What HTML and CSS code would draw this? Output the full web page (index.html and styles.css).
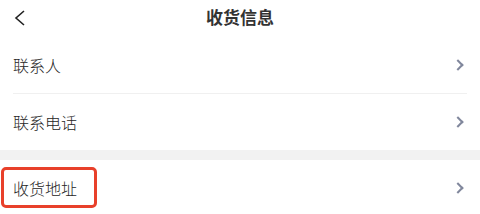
FILE: index.html
```html
<!DOCTYPE html>
<html>
	<head>
		<meta charset="UTF-8">
		<title>收货信息</title>
		<link rel="stylesheet" href="styles.css">
	</head>
	<body>
		<div class="header">
			<span class="back"><svg width="12" height="16" viewBox="0 0 12 16"><path d="M10 1 L2 8 L10 15" fill="none" stroke="#222" stroke-width="1.6"/></svg></span>
			<strong>收货信息</strong>
		</div>
		<ul class="list">
			<li class="line"><span>联系人</span><i class="arrow"></i></li>
			<li><span>联系电话</span><i class="arrow"></i></li>
		</ul>
		<div class="gap"></div>
		<ul class="list">
			<li class="mark"><span>收货地址</span><i class="arrow"></i><b class="box"></b></li>
		</ul>
	</body>
</html>
```
FILE: styles.css
```css
* {margin: 0;padding: 0;list-style: none;box-sizing: border-box;}
body {width: 480px;height: 214px;overflow: hidden;background: #fff;font-family: "Noto Sans CJK SC", sans-serif;color: #333;}
.header {height: 37px;position: relative;text-align: center;padding-top: 5px;}
.header strong {font-size: 17px;line-height: 23px;font-weight: bold;color: #333;}
.back {position: absolute;left: 14px;top: 7px;}
.list {padding-left: 13px;}
.list li {height: 56px;display: flex;align-items: center;justify-content: space-between;padding-right: 17px;font-size: 16px;font-weight: 300;color: #262626;position: relative;}
.list li.line {border-bottom: 1px solid #f0f0f0;height: 57px;margin-right: 13px;padding-right: 4px;}
.arrow {width: 8px;height: 8px;border-top: 2px solid #80879c;border-right: 2px solid #80879c;transform: rotate(45deg);margin-right: 1px;}
.gap {height: 10px;background: #f2f2f2;}
.box {position: absolute;left: -12px;top: 7px;width: 96px;height: 41px;border: 3px solid #e8402a;border-radius: 5px;}
```
